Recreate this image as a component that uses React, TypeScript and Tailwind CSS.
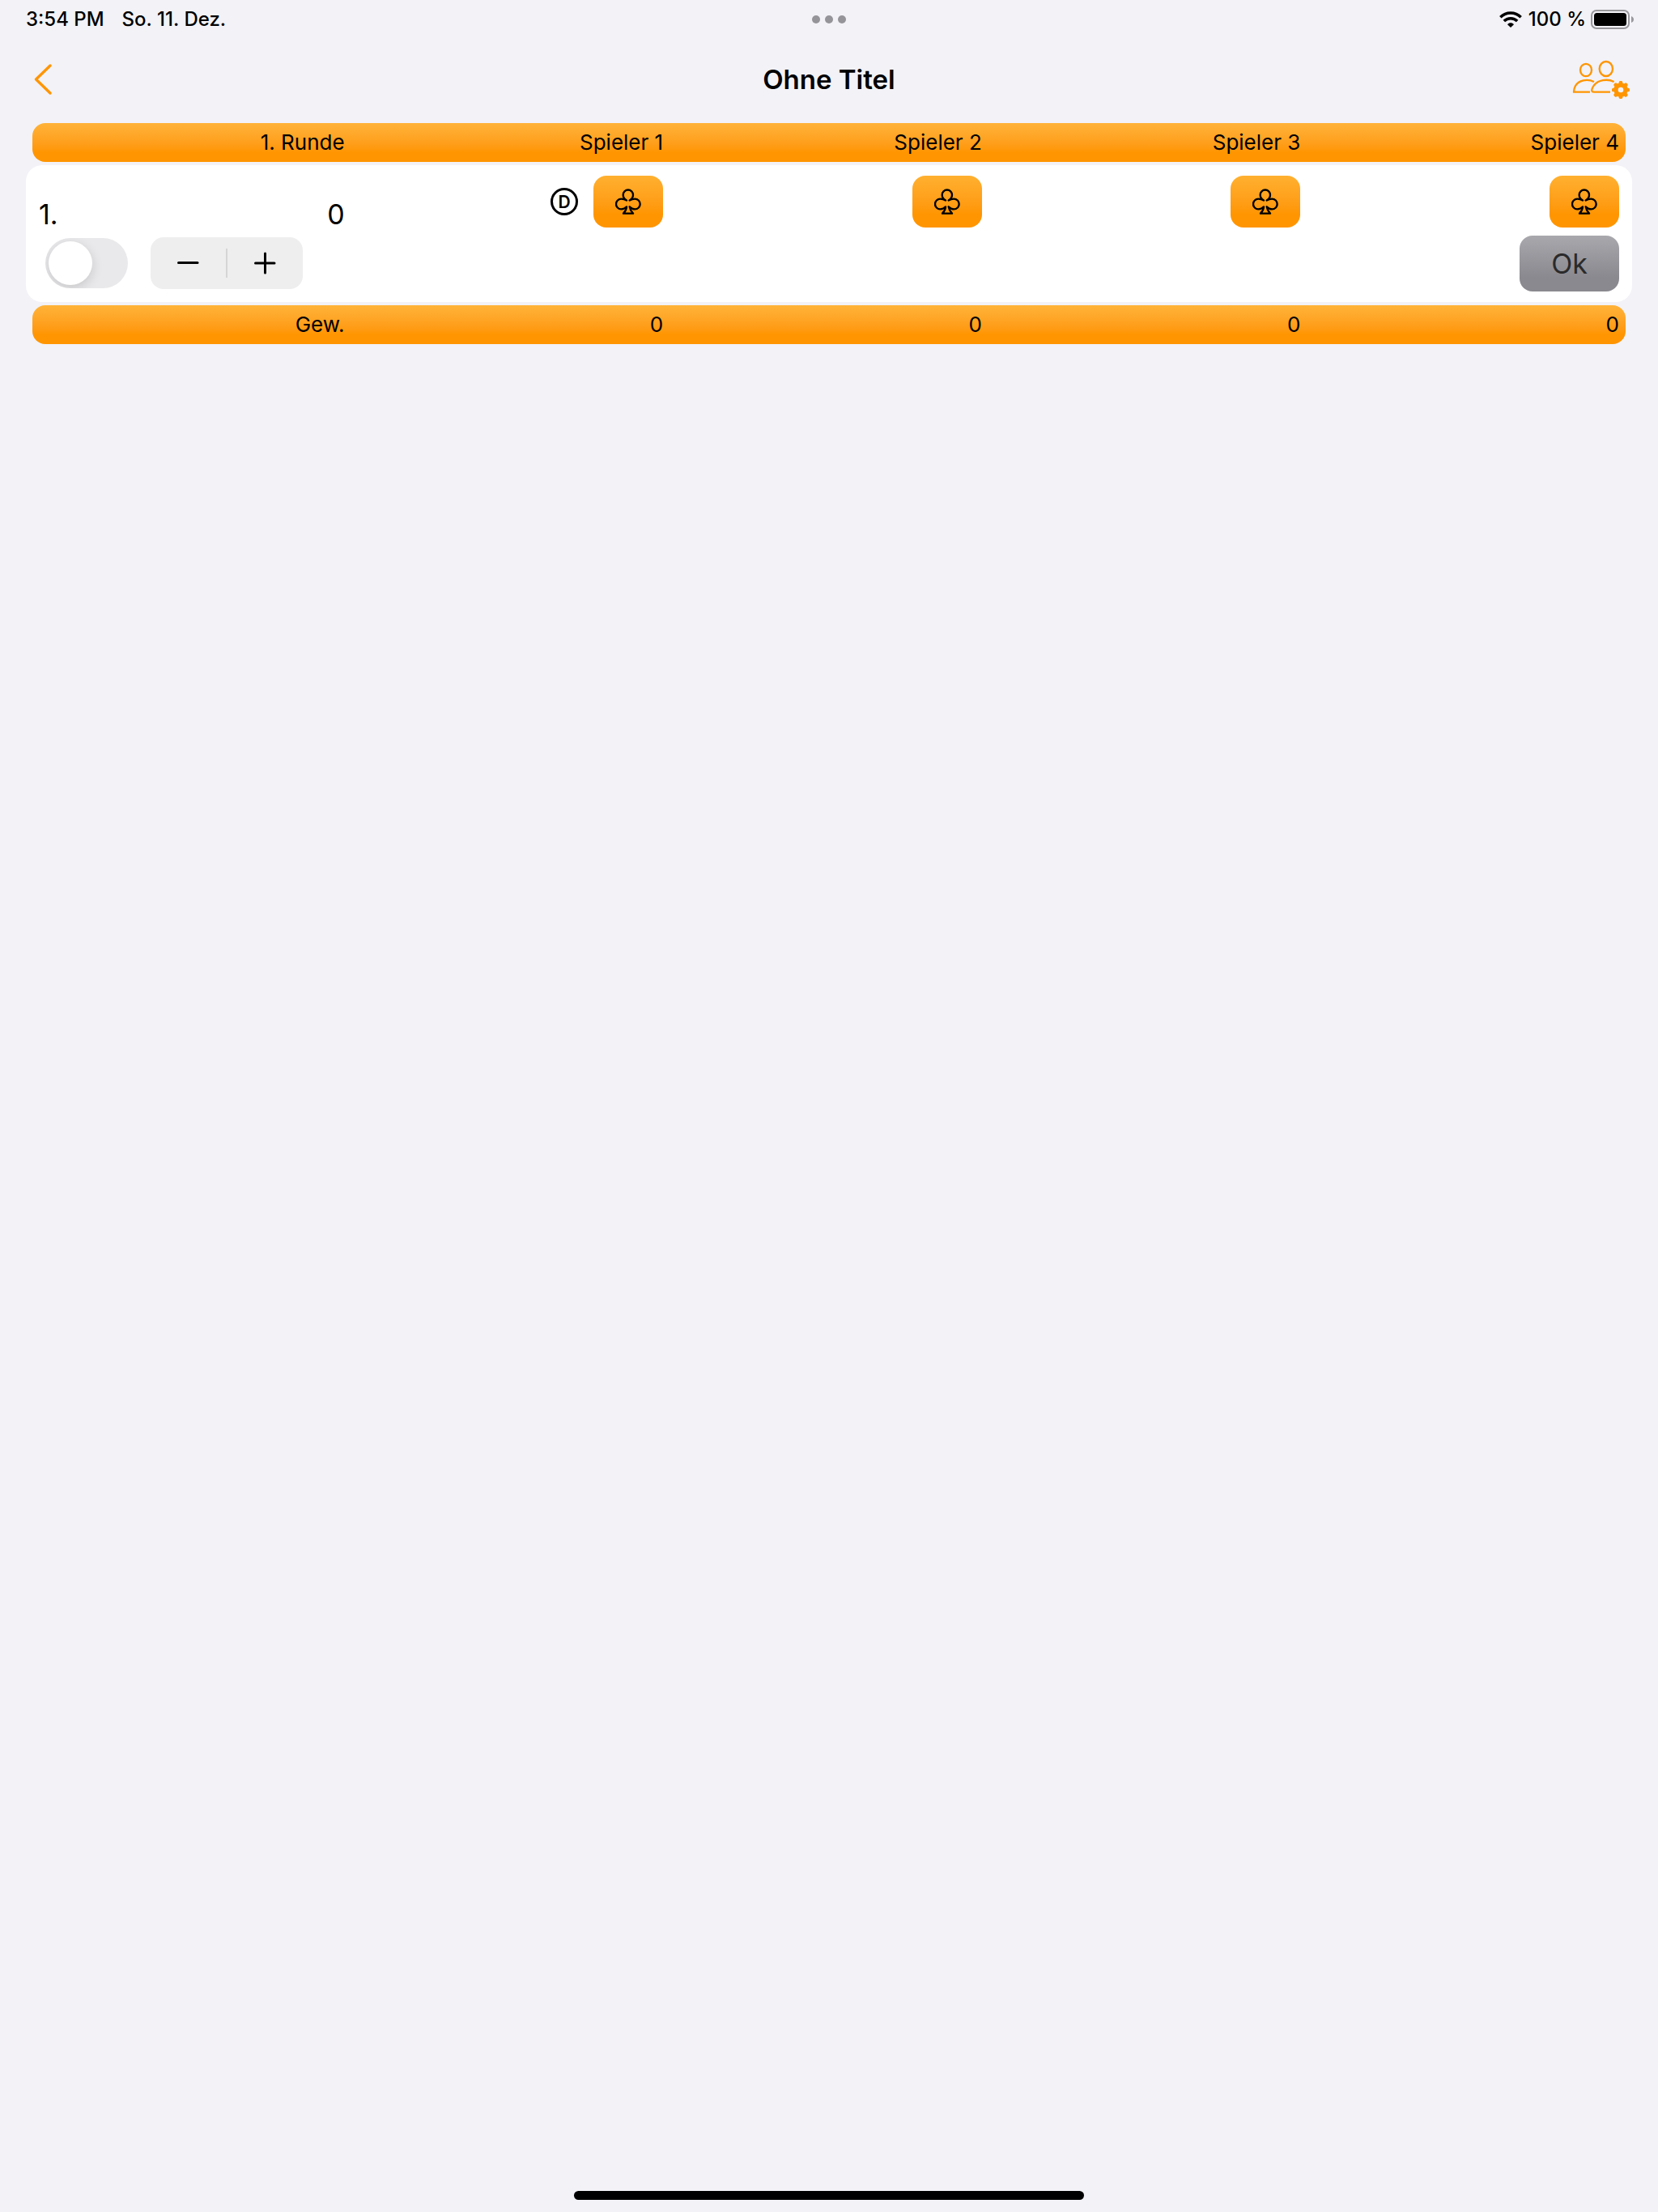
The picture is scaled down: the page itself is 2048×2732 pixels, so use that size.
import { useState } from "react";

const players = ["Spieler 1", "Spieler 2", "Spieler 3", "Spieler 4"];

const barClass =
  "mx-2 grid h-12 grid-cols-5 items-center rounded-2xl bg-linear-to-b from-[#ffb338] to-[#ff9500] to-75% text-[26px] leading-8";

function StatusBar() {
  return (
    <div className="grid h-12 grid-cols-3 items-center px-8 text-2xl font-medium">
      <div className="flex gap-[22px]">
        <span>3:54 PM</span>
        <span>So. 11. Dez.</span>
      </div>
      <div className="flex justify-center gap-1.5">
        <span className="size-2.5 rounded-full bg-[#949499]" />
        <span className="size-2.5 rounded-full bg-[#949499]" />
        <span className="size-2.5 rounded-full bg-[#949499]" />
      </div>
      <div className="-mr-0.5 flex items-center justify-end gap-1.5">
        <span className="flex items-center gap-2">
          <WifiIcon />
          <span>100 %</span>
        </span>
        <BatteryIcon />
      </div>
    </div>
  );
}

function WifiIcon() {
  return (
    <svg width="28" height="20" viewBox="0 0 84 60" fill="none" stroke="#000" strokeWidth="10.5" aria-hidden="true">
      <path d="M4 21.500 C25 0.500 59 0.500 80 21.500" />
      <path d="M17.500 36 C31 22.500 53 22.500 66.500 36" />
      <path d="M42 60 L30 48.500 C37 41 47 41 54 48.500 Z" fill="#000" stroke="none" />
    </svg>
  );
}

function BatteryIcon() {
  return (
    <svg width="53" height="24" viewBox="0 0 53 24" aria-hidden="true">
      <rect x="1" y="1" width="46" height="22" rx="6" fill="none" stroke="#98989c" strokeWidth="2" />
      <rect x="4" y="4" width="40" height="16" rx="3.500" fill="#000" />
      <path d="M50 8 C52 9 53 10 53 12 C53 14 52 15 50 16 Z" fill="#98989c" />
    </svg>
  );
}

function BackIcon() {
  return (
    <svg width="22" height="38" viewBox="0 0 22 38" fill="none" stroke="#ff9500" strokeWidth="3.300" strokeLinecap="round" strokeLinejoin="round" aria-hidden="true">
      <path d="M20 2 L2.500 19 L20 36" />
    </svg>
  );
}

function PlayersSettingsIcon() {
  const teeth = [0, 45, 90, 135, 180, 225, 270, 315];
  return (
    <svg width="72" height="49" viewBox="426 222 216 147" aria-hidden="true">
      <g fill="none" stroke="#ff9500" strokeWidth="7">
        <ellipse cx="477" cy="259.500" rx="21" ry="23" />
        <ellipse cx="551.500" cy="255" rx="24.500" ry="27" />
        <path d="M507 303 C481 290 450 298 438 318 C433 327 432 332 432 341 H492" strokeLinejoin="round" />
        <path d="M581 303 C555 290 522 297 507 316 C501 324 498 332 499 337 C500 341 502 341 506 341 H567" strokeLinejoin="round" />
      </g>
      <circle cx="606" cy="333" r="18" fill="none" stroke="#ff9500" strokeWidth="16" />
      {teeth.map((angle) => (
        <rect key={angle} x="599" y="300" width="14" height="14" rx="5" fill="#ff9500" transform={`rotate(${angle} 606 333)`} />
      ))}
    </svg>
  );
}

function ClubIcon() {
  return (
    <svg width="32" height="32" viewBox="0 0 96 96" fill="none" stroke="#000" strokeWidth="7" strokeLinejoin="round" aria-hidden="true">
      <path d="M42 43.500 C33 38 29 31 29 23 A18.500 18.500 0 0 1 66 23 C66 31 62 38 53 43.500 C59 40 66 38 73 38 A19 19 0 0 1 73 76 C65 76 59 73 53 67 C55 79 60 86 66 92 H30 C36 86 41 79 42 67 C37 73 30 76 22 76 A19 19 0 0 1 22 38 C29 38 36 40 42 43.500 Z" />
    </svg>
  );
}

function DealerIcon() {
  return (
    <span className="flex size-[34px] items-center justify-center rounded-full border-[3px] border-black text-[21px] leading-none font-semibold">
      D
    </span>
  );
}

function Stepper({ onStep }: { onStep: (delta: number) => void }) {
  return (
    <div className="flex h-16 w-[188px] items-center rounded-2xl bg-[#eeeeee]">
      <button type="button" aria-label="Weniger" onClick={() => onStep(-1)} className="flex h-full flex-1 items-center justify-center">
        <svg width="28" height="28" viewBox="0 0 28 28" stroke="#000" strokeWidth="3" strokeLinecap="round" aria-hidden="true">
          <path d="M1.500 13.500 H25" />
        </svg>
      </button>
      <span className="h-9 w-0.5 bg-[#d5d5d6]" />
      <button type="button" aria-label="Mehr" onClick={() => onStep(1)} className="flex h-full flex-1 items-center justify-center">
        <svg width="28" height="28" viewBox="0 0 28 28" stroke="#000" strokeWidth="3" strokeLinecap="round" aria-hidden="true">
          <path d="M1.500 14 H25 M13.500 2 V26" />
        </svg>
      </button>
    </div>
  );
}

export default function App() {
  const [value, setValue] = useState(0);

  return (
    <div className="flex min-h-screen flex-col bg-[#f2f2f7] font-['Inter',sans-serif] text-black">
      <StatusBar />
      <header className="grid h-25 grid-cols-[1fr_auto_1fr] items-center px-[34px]">
        <button type="button" aria-label="Zurück" className="justify-self-start pl-2">
          <BackIcon />
        </button>
        <h1 className="text-[33px] leading-10 font-semibold">Ohne Titel</h1>
        <button type="button" aria-label="Spieler verwalten" className="justify-self-end">
          <PlayersSettingsIcon />
        </button>
      </header>

      <main className="flex-1 px-8 pt-1">
        <table className="flex flex-col gap-1">
          <thead className="block">
            <tr className={barClass}>
              <th scope="col" className="px-2 text-right font-normal">1. Runde</th>
              {players.map((name) => (
                <th key={name} scope="col" className="px-2 text-right font-normal">{name}</th>
              ))}
            </tr>
          </thead>
          <tbody className="block">
            <tr className="grid grid-cols-5 rounded-[20px] bg-white px-2">
              <td className="flex flex-col justify-end gap-2 px-2 pb-4">
                <div className="flex justify-between text-[34px] leading-10">
                  <span>1.</span>
                  <output>{value}</output>
                </div>
                <div className="flex items-center gap-7 pl-2">
                  <label className="flex">
                    <input type="checkbox" role="switch" aria-label="Runde 1" className="peer sr-only" />
                    <span className="flex h-[62px] w-[102px] items-center overflow-hidden rounded-full bg-[#e9e9eb] px-1 peer-checked:justify-end peer-checked:bg-[#34c759]">
                      <span className="size-[54px] rounded-full bg-white shadow-[0_4px_14px_rgba(0,0,0,0.15)]" />
                    </span>
                  </label>
                  <Stepper onStep={(delta) => setValue((current) => Math.max(0, current + delta))} />
                </div>
              </td>
              {players.map((name, index) => (
                <td key={name} className="flex flex-col items-end gap-2.5 px-2 py-[13px]">
                  <div className="flex items-center gap-[19px]">
                    {index === 0 && <DealerIcon />}
                    <button
                      type="button"
                      aria-label={`Kreuz ${name}`}
                      className="flex h-16 w-[86px] items-center justify-center rounded-2xl bg-linear-to-b from-[#ffb02f] to-[#ff9500] to-75%"
                    >
                      <ClubIcon />
                    </button>
                  </div>
                  {index === players.length - 1 && (
                    <button
                      type="button"
                      className="h-[69px] w-[123px] rounded-2xl bg-linear-to-b from-[#a8a8ad] to-[#8a898f] to-75% text-[34px] leading-10 text-[#2a2a2b]"
                    >
                      Ok
                    </button>
                  )}
                </td>
              ))}
            </tr>
          </tbody>
          <tfoot className="block">
            <tr className={barClass}>
              <th scope="row" className="px-2 text-right font-normal">Gew.</th>
              {players.map((name) => (
                <td key={name} className="px-2 text-right">0</td>
              ))}
            </tr>
          </tfoot>
        </table>
      </main>

      <div className="mb-[15px] h-[11px] w-[630px] self-center rounded-full bg-black" />
    </div>
  );
}
